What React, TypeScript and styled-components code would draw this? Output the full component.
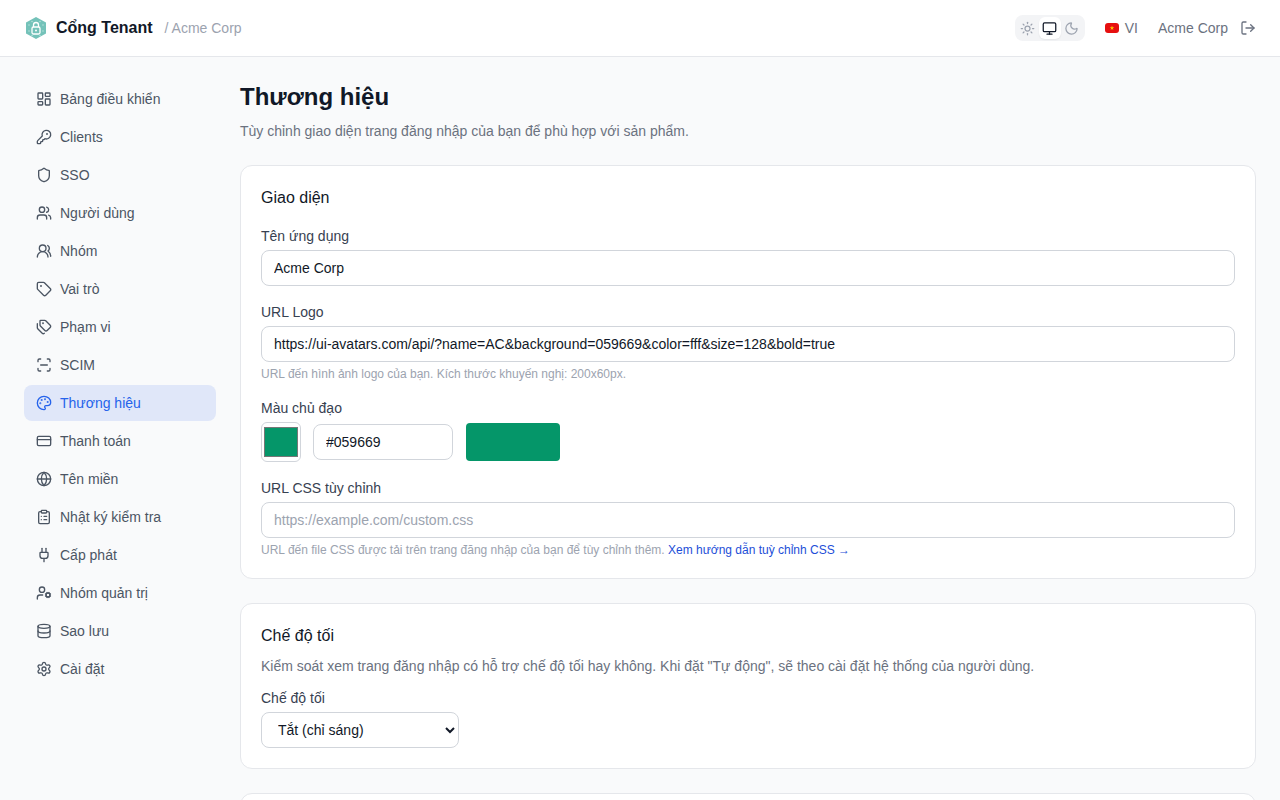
import styled, { createGlobalStyle } from 'styled-components'
import {
  LayoutDashboard,
  KeyRound,
  Shield,
  Users,
  UsersRound,
  Tag,
  Tags,
  ScanLine,
  Palette,
  CreditCard,
  Globe,
  ClipboardList,
  Plug,
  UserCog,
  Database,
  Settings,
  Sun,
  Monitor,
  Moon,
  LogOut,
} from 'lucide-react'

const GlobalStyle = createGlobalStyle`
  html, body {
    margin: 0;
    padding: 0;
    height: 100%;
    background: #f9fafb;
    font-family: "Liberation Sans", Arial, sans-serif;
    color: #111827;
    overflow: hidden;
  }
  * { box-sizing: border-box; }
`

const Header = styled.header`
  height: 57px;
  background: #fff;
  border-bottom: 1px solid #e5e7eb;
  display: flex;
  align-items: center;
  justify-content: space-between;
  padding: 0 24px;
`

const Brand = styled.div`
  display: flex;
  align-items: center;
`

const BrandName = styled.span`
  margin-left: 8px;
  font-size: 16px;
  font-weight: 700;
  color: #111827;
`

const Tenant = styled.span`
  margin-left: 12px;
  font-size: 14px;
  color: #9ca3af;
`

const HeaderRight = styled.div`
  display: flex;
  align-items: center;
`

const ThemeSwitch = styled.div`
  display: flex;
  align-items: center;
  padding: 2px;
  background: #f3f4f6;
  border-radius: 8px;
  height: 26px;
`

const ThemeButton = styled.button<{ $active?: boolean }>`
  width: 22px;
  height: 22px;
  padding: 0;
  border: 0;
  border-radius: 6px;
  display: flex;
  align-items: center;
  justify-content: center;
  background: ${(p) => (p.$active ? '#fff' : 'transparent')};
  color: ${(p) => (p.$active ? '#111827' : '#9ca3af')};
  box-shadow: ${(p) => (p.$active ? '0 1px 2px rgba(0,0,0,.06)' : 'none')};
`

const Lang = styled.div`
  margin-left: 20px;
  display: flex;
  align-items: center;
  gap: 6px;
  font-size: 14px;
  color: #6b7280;
`

const UserName = styled.span`
  margin-left: 20px;
  font-size: 14px;
  color: #6b7280;
`

const LogoutButton = styled.button`
  margin-left: 12px;
  padding: 0;
  border: 0;
  background: none;
  color: #6b7280;
  display: flex;
`

const Layout = styled.div`
  display: flex;
  gap: 24px;
  padding: 24px;
`

const Sidebar = styled.nav`
  width: 192px;
  flex-shrink: 0;
  display: flex;
  flex-direction: column;
  gap: 2px;
`

const NavItem = styled.a<{ $active?: boolean }>`
  height: 36px;
  display: flex;
  align-items: center;
  gap: 8px;
  padding: 0 12px;
  border-radius: 8px;
  font-size: 14px;
  background: ${(p) => (p.$active ? '#e0e7f9' : 'transparent')};
  color: ${(p) => (p.$active ? '#2563eb' : '#4b5563')};
`

const Main = styled.main`
  flex: 1;
  min-width: 0;
`

const Title = styled.h1`
  margin: 0;
  font-size: 24px;
  line-height: 32px;
  font-weight: 700;
  color: #111827;
`

const Subtitle = styled.p`
  margin: 8px 0 24px;
  font-size: 14px;
  line-height: 20px;
  color: #6b7280;
`

const Card = styled.section`
  background: #fff;
  border: 1px solid #e5e7eb;
  border-radius: 12px;
  padding: 20px;
  margin-bottom: 24px;
`

const CardTitle = styled.h2<{ $gap: number }>`
  margin: 0 0 ${(p) => p.$gap}px;
  font-size: 16px;
  line-height: 24px;
  font-weight: 400;
  color: #111827;
`

const CardText = styled.p`
  margin: 0 0 12px;
  font-size: 14px;
  line-height: 20px;
  color: #6b7280;
`

const Field = styled.div`
  margin-bottom: 16px;
  &:last-child { margin-bottom: 0; }
`

const Label = styled.label`
  display: block;
  margin-bottom: 4px;
  font-size: 14px;
  line-height: 20px;
  color: #374151;
`

const TextInput = styled.input<{ $width?: number }>`
  display: block;
  width: ${(p) => (p.$width ? `${p.$width}px` : '100%')};
  height: 36px;
  padding: 0 12px;
  background: #fff;
  border: 1px solid #d1d5db;
  border-radius: 8px;
  font: 14px "Liberation Sans", Arial, sans-serif;
  color: #111827;
  outline: none;
  &::placeholder { color: #9ca3af; }
`

const Hint = styled.p`
  margin: 4px 0 0;
  font-size: 12px;
  line-height: 16px;
  color: #9ca3af;
`

const HintLink = styled.a`
  color: #1d4ed8;
`

const ColorRow = styled.div`
  display: flex;
  align-items: center;
  gap: 12px;
`

const ColorInput = styled.input`
  width: 40px;
  height: 40px;
  padding: 0;
  background: #fff;
  border: 1px solid #d1d5db;
  border-radius: 6px;
`

const Preview = styled.button<{ $color: string }>`
  width: 94px;
  height: 38px;
  margin-left: 1px;
  border: 0;
  border-radius: 4px;
  background: ${(p) => p.$color};
`

const Select = styled.select`
  display: block;
  width: 198px;
  height: 36px;
  padding: 0 12px;
  background: #fff;
  border: 1px solid #d1d5db;
  border-radius: 8px;
  font: 14px "Liberation Sans", Arial, sans-serif;
  color: #111827;
`

const navItems = [
  { label: 'Bảng điều khiển', icon: LayoutDashboard },
  { label: 'Clients', icon: KeyRound },
  { label: 'SSO', icon: Shield },
  { label: 'Người dùng', icon: Users },
  { label: 'Nhóm', icon: UsersRound },
  { label: 'Vai trò', icon: Tag },
  { label: 'Phạm vi', icon: Tags },
  { label: 'SCIM', icon: ScanLine },
  { label: 'Thương hiệu', icon: Palette, active: true },
  { label: 'Thanh toán', icon: CreditCard },
  { label: 'Tên miền', icon: Globe },
  { label: 'Nhật ký kiểm tra', icon: ClipboardList },
  { label: 'Cấp phát', icon: Plug },
  { label: 'Nhóm quản trị', icon: UserCog },
  { label: 'Sao lưu', icon: Database },
  { label: 'Cài đặt', icon: Settings },
]

const logoDots = [
  [5, 9],
  [5, 15],
  [19, 9],
  [19, 15],
  [8, 5.500],
  [16, 5.500],
  [8, 19.500],
  [16, 19.500],
]

const Logo = () => (
  <svg width="24" height="24" viewBox="0 0 24 24">
    <path d="M12 1 22 6.500V17.500L12 23 2 17.500V6.500Z" fill="#74c2b9" />
    {logoDots.map(([x, y]) => (
      <circle key={`${x}-${y}`} cx={x} cy={y} r="0.700" fill="#bfe5e0" />
    ))}
    <rect x="8" y="11" width="8" height="7" rx="1.500" fill="none" stroke="#fff" strokeWidth="1.300" />
    <path d="M9.500 11V9a2.500 2.500 0 0 1 5 0v2" fill="none" stroke="#fff" strokeWidth="1.300" />
    <circle cx="12" cy="14.500" r="1" fill="#fff" />
  </svg>
)

const FlagVN = () => (
  <svg width="14" height="10" viewBox="0 0 14 10">
    <rect width="14" height="10" rx="3" fill="#e60f0f" />
    <path d="M7 2.600 7.600 4.300H9.300L7.900 5.300 8.400 7 7 6 5.600 7 6.100 5.300 4.700 4.300H6.400Z" fill="#ffc400" />
  </svg>
)

export default function App() {
  return (
    <>
      <GlobalStyle />
      <Header>
        <Brand>
          <Logo />
          <BrandName>Cổng Tenant</BrandName>
          <Tenant>/ Acme Corp</Tenant>
        </Brand>
        <HeaderRight>
          <ThemeSwitch>
            <ThemeButton><Sun size={15} /></ThemeButton>
            <ThemeButton $active><Monitor size={15} /></ThemeButton>
            <ThemeButton><Moon size={15} /></ThemeButton>
          </ThemeSwitch>
          <Lang>
            <FlagVN />
            VI
          </Lang>
          <UserName>Acme Corp</UserName>
          <LogoutButton><LogOut size={16} /></LogoutButton>
        </HeaderRight>
      </Header>
      <Layout>
        <Sidebar>
          {navItems.map(({ label, icon: Icon, active }) => (
            <NavItem key={label} $active={active}>
              <Icon size={16} />
              {label}
            </NavItem>
          ))}
        </Sidebar>
        <Main>
          <Title>Thương hiệu</Title>
          <Subtitle>Tùy chỉnh giao diện trang đăng nhập của bạn để phù hợp với sản phẩm.</Subtitle>
          <Card>
            <CardTitle $gap={16}>Giao diện</CardTitle>
            <Field>
              <Label>Tên ứng dụng</Label>
              <TextInput defaultValue="Acme Corp" />
            </Field>
            <Field>
              <Label>URL Logo</Label>
              <TextInput defaultValue="https://ui-avatars.com/api/?name=AC&background=059669&color=fff&size=128&bold=true" />
              <Hint>URL đến hình ảnh logo của bạn. Kích thước khuyến nghị: 200x60px.</Hint>
            </Field>
            <Field>
              <Label>Màu chủ đạo</Label>
              <ColorRow>
                <ColorInput type="color" defaultValue="#059669" />
                <TextInput $width={140} defaultValue="#059669" />
                <Preview $color="#059669" />
              </ColorRow>
            </Field>
            <Field>
              <Label>URL CSS tùy chỉnh</Label>
              <TextInput placeholder="https://example.com/custom.css" />
              <Hint>
                URL đến file CSS được tải trên trang đăng nhập của bạn để tùy chỉnh thêm.{' '}
                <HintLink>Xem hướng dẫn tuỳ chỉnh CSS →</HintLink>
              </Hint>
            </Field>
          </Card>
          <Card>
            <CardTitle $gap={8}>Chế độ tối</CardTitle>
            <CardText>
              Kiểm soát xem trang đăng nhập có hỗ trợ chế độ tối hay không. Khi đặt "Tự động", sẽ theo cài đặt hệ thống của người dùng.
            </CardText>
            <Field>
              <Label>Chế độ tối</Label>
              <Select defaultValue="off">
                <option value="off">Tắt (chỉ sáng)</option>
                <option value="auto">Tự động</option>
                <option value="on">Bật</option>
              </Select>
            </Field>
          </Card>
          <Card />
        </Main>
      </Layout>
    </>
  )
}
